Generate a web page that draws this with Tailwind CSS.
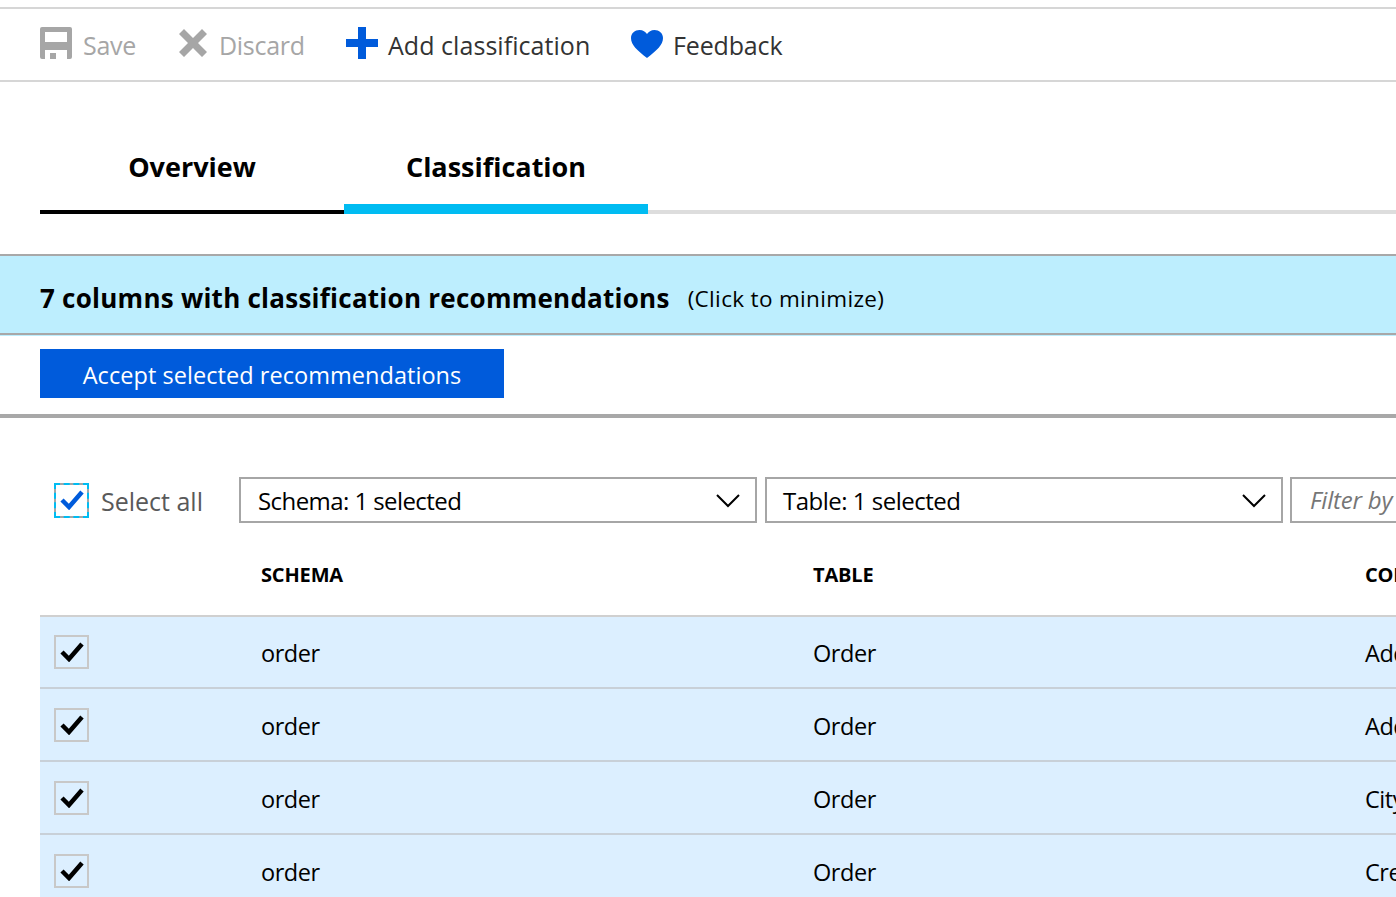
<!DOCTYPE html>
<html lang="en">
<head>
    <meta charset="UTF-8">
    <title>Classification</title>
    <script src="https://cdn.jsdelivr.net/npm/@tailwindcss/browser@4"></script>
</head>
<body class="bg-white h-[897px] overflow-hidden font-['Open_Sans',sans-serif] text-black">

    <!-- Toolbar -->
    <div class="mt-[7px] h-[75px] border-y-2 border-[#d6d6d6] pl-[40px] flex items-center text-[25px] tracking-[-0.3px]">
        <div class="flex items-center text-[#a6a6a6] w-[138px]">
            <svg class="w-[32px] h-[32px] mr-[11px] -mt-[4px]" viewBox="0 0 32 32"><path fill="#a6a6a6" fill-rule="evenodd" d="M2 0H30a2 2 0 0 1 2 2V30a2 2 0 0 1-2 2H2a2 2 0 0 1-2-2V2a2 2 0 0 1 2-2ZM5 5V15H27V5ZM5 23V32H27V23ZM10 26V32H16V26Z"/></svg>
            <span class="mt-[2px]">Save</span>
        </div>
        <div class="flex items-center text-[#a6a6a6] w-[167px]">
            <svg class="w-[28px] h-[28px] ml-[1px] mr-[12px] -mt-[4px]" viewBox="0 0 28 28"><path fill="#a6a6a6" d="M5 0 14 9 23 0 28 5 19 14 28 23 23 28 14 19 5 28 0 23 9 14 0 5Z"/></svg>
            <span class="mt-[2px]">Discard</span>
        </div>
        <div class="flex items-center text-[#333333] w-[285px]">
            <svg class="w-[32px] h-[32px] ml-[1px] mr-[10px] -mt-[4px]" viewBox="0 0 32 32"><path fill="#005bdb" d="M12 0H20V12H32V20H20V32H12V20H0V12H12Z"/></svg>
            <span class="mt-[2px] tracking-[0.05px]">Add classification</span>
        </div>
        <div class="flex items-center text-[#333333]">
            <svg class="w-[32px] h-[28px] ml-[1px] mr-[10px] -mt-[2px]" viewBox="0 0 32 28"><path fill="#005bdb" d="M16 28C6 20 0 15 0 8 0 3 4 0 8.500 0 12 0 14.500 1.700 16 4 17.500 1.700 20 0 23.500 0 28 0 32 3 32 8 32 15 26 20 16 28Z"/></svg>
            <span class="mt-[2px] tracking-[-0.15px]">Feedback</span>
        </div>
    </div>

    <!-- Tabs -->
    <div class="mt-[50px] ml-[40px] flex items-end h-[82px] font-bold text-[27px] tracking-[0px]">
        <div class="w-[304px] h-full flex items-start justify-center pt-[15px] border-b-4 border-black">Overview</div>
        <div class="w-[304px] h-full flex items-start justify-center pt-[15px] relative">
            Classification
            <div class="absolute left-0 right-0 bottom-0 h-[10px] bg-[#00bcf2]"></div>
        </div>
        <div class="flex-1 h-[4px] bg-[#dddddd]"></div>
    </div>

    <!-- Recommendations banner -->
    <div class="mt-[40px] h-[81px] bg-[#bdeefe] border-y-2 border-[#a8a8a8] pl-[40px] pt-[8px] flex items-center shadow-[0_1px_0_#bdeefe]">
        <span class="font-bold text-[26px] tracking-[0.25px] mr-[18px]">7 columns with classification recommendations</span>
        <span class="text-[22.500px] tracking-[0.33px]">(Click to minimize)</span>
    </div>

    <div class="h-[83px] pl-[40px] pt-[14px] border-b-4 border-[#a8a8a8]">
        <button class="w-[464px] h-[49px] pt-[4px] bg-[#005bdb] text-white text-[23.500px] tracking-[0.05px] flex items-center justify-center">Accept selected recommendations</button>
    </div>

    <!-- Filters -->
    <div class="mt-[59px] h-[46px] flex items-center whitespace-nowrap">
        <div class="ml-[54px] w-[185px] flex items-center">
            <div class="w-[35px] h-[35px] border-2 border-[#a6a6a6] outline-2 -outline-offset-2 outline-dashed outline-[#00bcf2] bg-white flex items-center justify-center">
                <svg class="w-[24px] h-[20px]" viewBox="0 0 24 20"><path fill="none" stroke="#005bdb" stroke-width="4.500" d="M2 10 9 17 22 2"/></svg>
            </div>
            <span class="ml-[12px] mt-[4px] text-[25px] tracking-[0px] text-[#595959]">Select all</span>
        </div>
        <div class="w-[518px] h-full border-2 border-[#a6a6a6] pl-[17px] pr-[15px] flex items-center justify-between text-[24px] tracking-[-0.57px]">
            <span class="mt-[2px]">Schema: 1 selected</span>
            <svg class="w-[24px] h-[14px] mt-[2px]" viewBox="0 0 24 14"><path fill="none" stroke="#000" stroke-width="2" d="M1 1 12 12 23 1"/></svg>
        </div>
        <div class="ml-[8px] w-[518px] h-full border-2 border-[#a6a6a6] pl-[16px] pr-[15px] flex items-center justify-between text-[24px] tracking-[-0.5px]">
            <span class="mt-[2px]">Table: 1 selected</span>
            <svg class="w-[24px] h-[14px] mt-[2px]" viewBox="0 0 24 14"><path fill="none" stroke="#000" stroke-width="2" d="M1 1 12 12 23 1"/></svg>
        </div>
        <div class="ml-[7px] flex-1 h-full border-2 border-r-0 border-[#a6a6a6] pl-[18px] flex items-center overflow-hidden text-[24px] tracking-[-0.2px] italic text-[#767676]">Filter by column</div>
    </div>

    <!-- Table -->
    <div class="ml-[40px] overflow-hidden whitespace-nowrap text-[23.500px] tracking-[-0.45px]">
        <div class="h-[94px] pt-[12px] border-b-2 border-[#d0d0d0] grid grid-cols-[221px_552px_552px_100px] items-center font-bold text-[20px] tracking-[-0.15px]">
            <div></div><div>SCHEMA</div><div>TABLE</div><div>COLUMN</div>
        </div>
        <div class="h-[72px] bg-[#dcefff] border-b-2 border-[#c8d0d8] grid grid-cols-[221px_552px_552px_100px] items-center">
            <div class="pl-[14px]"><div class="w-[35px] h-[34px] border-2 border-[#c8c8c8] flex items-center justify-center"><svg class="w-[24px] h-[20px]" viewBox="0 0 24 20"><path fill="none" stroke="#000" stroke-width="4.500" d="M2 10 9 17 22 2"/></svg></div></div>
            <div class="mt-[4px]">order</div><div class="mt-[4px]">Order</div><div class="mt-[4px]">AddressLine1</div>
        </div>
        <div class="h-[73px] pt-[1px] bg-[#dcefff] border-b-2 border-[#c8d0d8] grid grid-cols-[221px_552px_552px_100px] items-center">
            <div class="pl-[14px]"><div class="w-[35px] h-[34px] border-2 border-[#c8c8c8] flex items-center justify-center"><svg class="w-[24px] h-[20px]" viewBox="0 0 24 20"><path fill="none" stroke="#000" stroke-width="4.500" d="M2 10 9 17 22 2"/></svg></div></div>
            <div class="mt-[4px]">order</div><div class="mt-[4px]">Order</div><div class="mt-[4px]">AddressLine2</div>
        </div>
        <div class="h-[73px] pt-[1px] bg-[#dcefff] border-b-2 border-[#c8d0d8] grid grid-cols-[221px_552px_552px_100px] items-center">
            <div class="pl-[14px]"><div class="w-[35px] h-[34px] border-2 border-[#c8c8c8] flex items-center justify-center"><svg class="w-[24px] h-[20px]" viewBox="0 0 24 20"><path fill="none" stroke="#000" stroke-width="4.500" d="M2 10 9 17 22 2"/></svg></div></div>
            <div class="mt-[4px]">order</div><div class="mt-[4px]">Order</div><div class="mt-[4px]">City</div>
        </div>
        <div class="h-[73px] pt-[1px] bg-[#dcefff] border-b-2 border-[#c8d0d8] grid grid-cols-[221px_552px_552px_100px] items-center">
            <div class="pl-[14px]"><div class="w-[35px] h-[34px] border-2 border-[#c8c8c8] flex items-center justify-center"><svg class="w-[24px] h-[20px]" viewBox="0 0 24 20"><path fill="none" stroke="#000" stroke-width="4.500" d="M2 10 9 17 22 2"/></svg></div></div>
            <div class="mt-[4px]">order</div><div class="mt-[4px]">Order</div><div class="mt-[4px]">CreditCard</div>
        </div>
    </div>
</body>
</html>
